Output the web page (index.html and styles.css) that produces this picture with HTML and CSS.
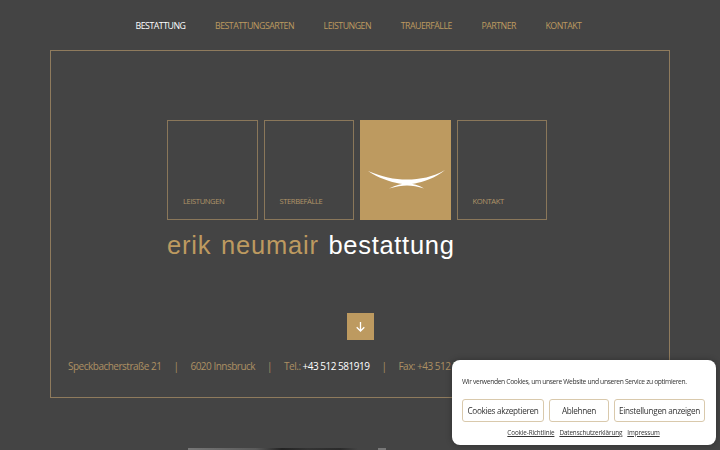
FILE: index.html
```html
<!DOCTYPE html>
<html lang="de">
<head>
<meta charset="utf-8">
<title>Erik Neumair Bestattung</title>
<link rel="stylesheet" href="styles.css">
</head>
<body>
<nav class="nav">
  <a class="nav-link active">BESTATTUNG</a>
  <a class="nav-link">BESTATTUNGSARTEN</a>
  <a class="nav-link">LEISTUNGEN</a>
  <a class="nav-link">TRAUERFÄLLE</a>
  <a class="nav-link">PARTNER</a>
  <a class="nav-link">KONTAKT</a>
</nav>
<main class="frame">
  <div class="tiles">
    <a class="tile"><span>LEISTUNGEN</span></a>
    <a class="tile"><span>STERBEFÄLLE</span></a>
    <div class="tile tile-logo">
      <svg class="mark" width="78" height="19" viewBox="0 0 78 19">
        <path d="M0 1 C14 7 26 9.500 39 9.500 C52 9.500 65 7 77 0 C68 8 54 12 47 13.500 C43 14.300 35 14.300 31 13.500 C23 12 10 8 0 1Z" fill="#fff"/>
        <path d="M21 18.500 C28 15 34 13.500 39 13.500 C45 13.500 51 15 56 18.500 C50 16.500 44 15.500 39 15.500 C34 15.500 28 16.500 21 18.500Z" fill="#fff"/>
      </svg>
    </div>
    <a class="tile"><span>KONTAKT</span></a>
  </div>
  <h1 class="wordmark"><span class="gold">erik neumair</span> bestattung</h1>
  <a class="down">
    <svg width="11" height="11" viewBox="0 0 11 11" fill="none" stroke="#fff" stroke-width="1.300">
      <path d="M5.500 1V10M1.700 6.200L5.500 10L9.300 6.200"/>
    </svg>
  </a>
  <p class="contact">
    <span>Speckbacherstraße 21</span><i>|</i><span>6020 Innsbruck</span><i>|</i><span>Tel.: <b>+43 512 581919</b></span><i>|</i><span>Fax: +43 512 581919</span>
  </p>
</main>
<div class="photo"></div>
<aside class="cookie">
  <p class="cookie-text">Wir verwenden Cookies, um unsere Website und unseren Service zu optimieren.</p>
  <div class="cookie-buttons">
    <button class="btn btn-a">Cookies akzeptieren</button>
    <button class="btn btn-b">Ablehnen</button>
    <button class="btn btn-c">Einstellungen anzeigen</button>
  </div>
  <div class="cookie-links">
    <a>Cookie-Richtlinie</a><a>Datenschutzerklärung</a><a>Impressum</a>
  </div>
</aside>
</body>
</html>
```

FILE: styles.css
```css
* { box-sizing: border-box; }
html, body { height: 100%; overflow: hidden; }
body {
  margin: 0;
  background: #444444;
  font-family: "Open Sans", sans-serif;
  color: #bd9a60;
}
.nav {
  height: 50px;
  display: flex;
  justify-content: center;
  align-items: center;
  gap: 29.5px;
  font-size: 8.800px;
  letter-spacing: -0.5px;
  padding: 1px 3px 0 0;
}
.nav-link { color: #bd9a60; }
.nav-link.active { color: #fff; }
.frame {
  height: 348px;
  margin: 0 50px;
  border: 1px solid #8f7b5d;
  display: flex;
  flex-direction: column;
  align-items: center;
}
.tiles {
  display: flex;
  gap: 6px;
  margin: 69px 6px 0 0;
}
.tile {
  width: 90.5px;
  height: 100px;
  border: 1px solid #8a775a;
  display: flex;
  align-items: flex-end;
  padding: 0 0 13px 15px;
  font-size: 7.600px;
  letter-spacing: -0.4px;
  color: #b09468;
}
.tile-logo {
  background: #bd9a60;
  border: 0;
  padding: 0;
  justify-content: center;
  align-items: flex-start;
}
.mark { margin: 50px 0 0 3px; }
.wordmark {
  width: 380px;
  margin: 10px 6px 0 0;
  font: 400 25.500px/30px "Liberation Sans", Arial, sans-serif;
  letter-spacing: 0.700px;
  word-spacing: 2px;
  color: #fff;
}
.gold { color: #bd9a60; letter-spacing: 0.780px; }
.down {
  width: 27px;
  height: 27px;
  margin-top: 53px;
  background: #bd9a60;
  display: flex;
  align-items: center;
  justify-content: center;
}
.contact {
  align-self: flex-start;
  margin: 18px 0 0 17px;
  font-size: 10px;
  letter-spacing: -0.5px;
  line-height: 16px;
  white-space: nowrap;
  color: #ad9063;
}
.contact i { font-style: normal; margin: 0 12px; }
.contact b { font-weight: 400; color: #fff; }
.photo {
  width: 200px;
  height: 4px;
  margin: 50px 0 0 188px;
  background: linear-gradient(90deg, #777 0, #5a5a5a 34%, #222 47%, #333 60%, #2a2a2a 76%, #444 85%, #444 95%, #777 95%, #777 99%, #444 99%);
}
.cookie {
  position: fixed;
  left: 452px;
  top: 360px;
  width: 264px;
  height: 85px;
  background: #fff;
  border-radius: 8px;
  box-shadow: 0 0 6px rgba(0, 0, 0, 0.3);
  padding: 16px 11px 0 10px;
  color: #333;
}
.cookie-text {
  margin: 0;
  font-size: 6.700px;
  letter-spacing: -0.33px;
  line-height: 11px;
  white-space: nowrap;
}
.cookie-buttons {
  display: flex;
  justify-content: space-between;
  margin-top: 12px;
}
.btn {
  height: 23px;
  padding: 0;
  background: #fff;
  border: 1px solid #d9c9ac;
  border-radius: 3px;
  font: 400 8.200px "Open Sans", sans-serif;
  letter-spacing: -0.3px;
  color: #333;
}
.btn-a { width: 82px; }
.btn-b { width: 60px; }
.btn-c { width: 91px; }
.cookie-links {
  display: flex;
  justify-content: center;
  gap: 5px;
  margin-top: 6px;
  font-size: 6.300px;
  letter-spacing: -0.1px;
  line-height: 10px;
  text-decoration: underline;
}
```
